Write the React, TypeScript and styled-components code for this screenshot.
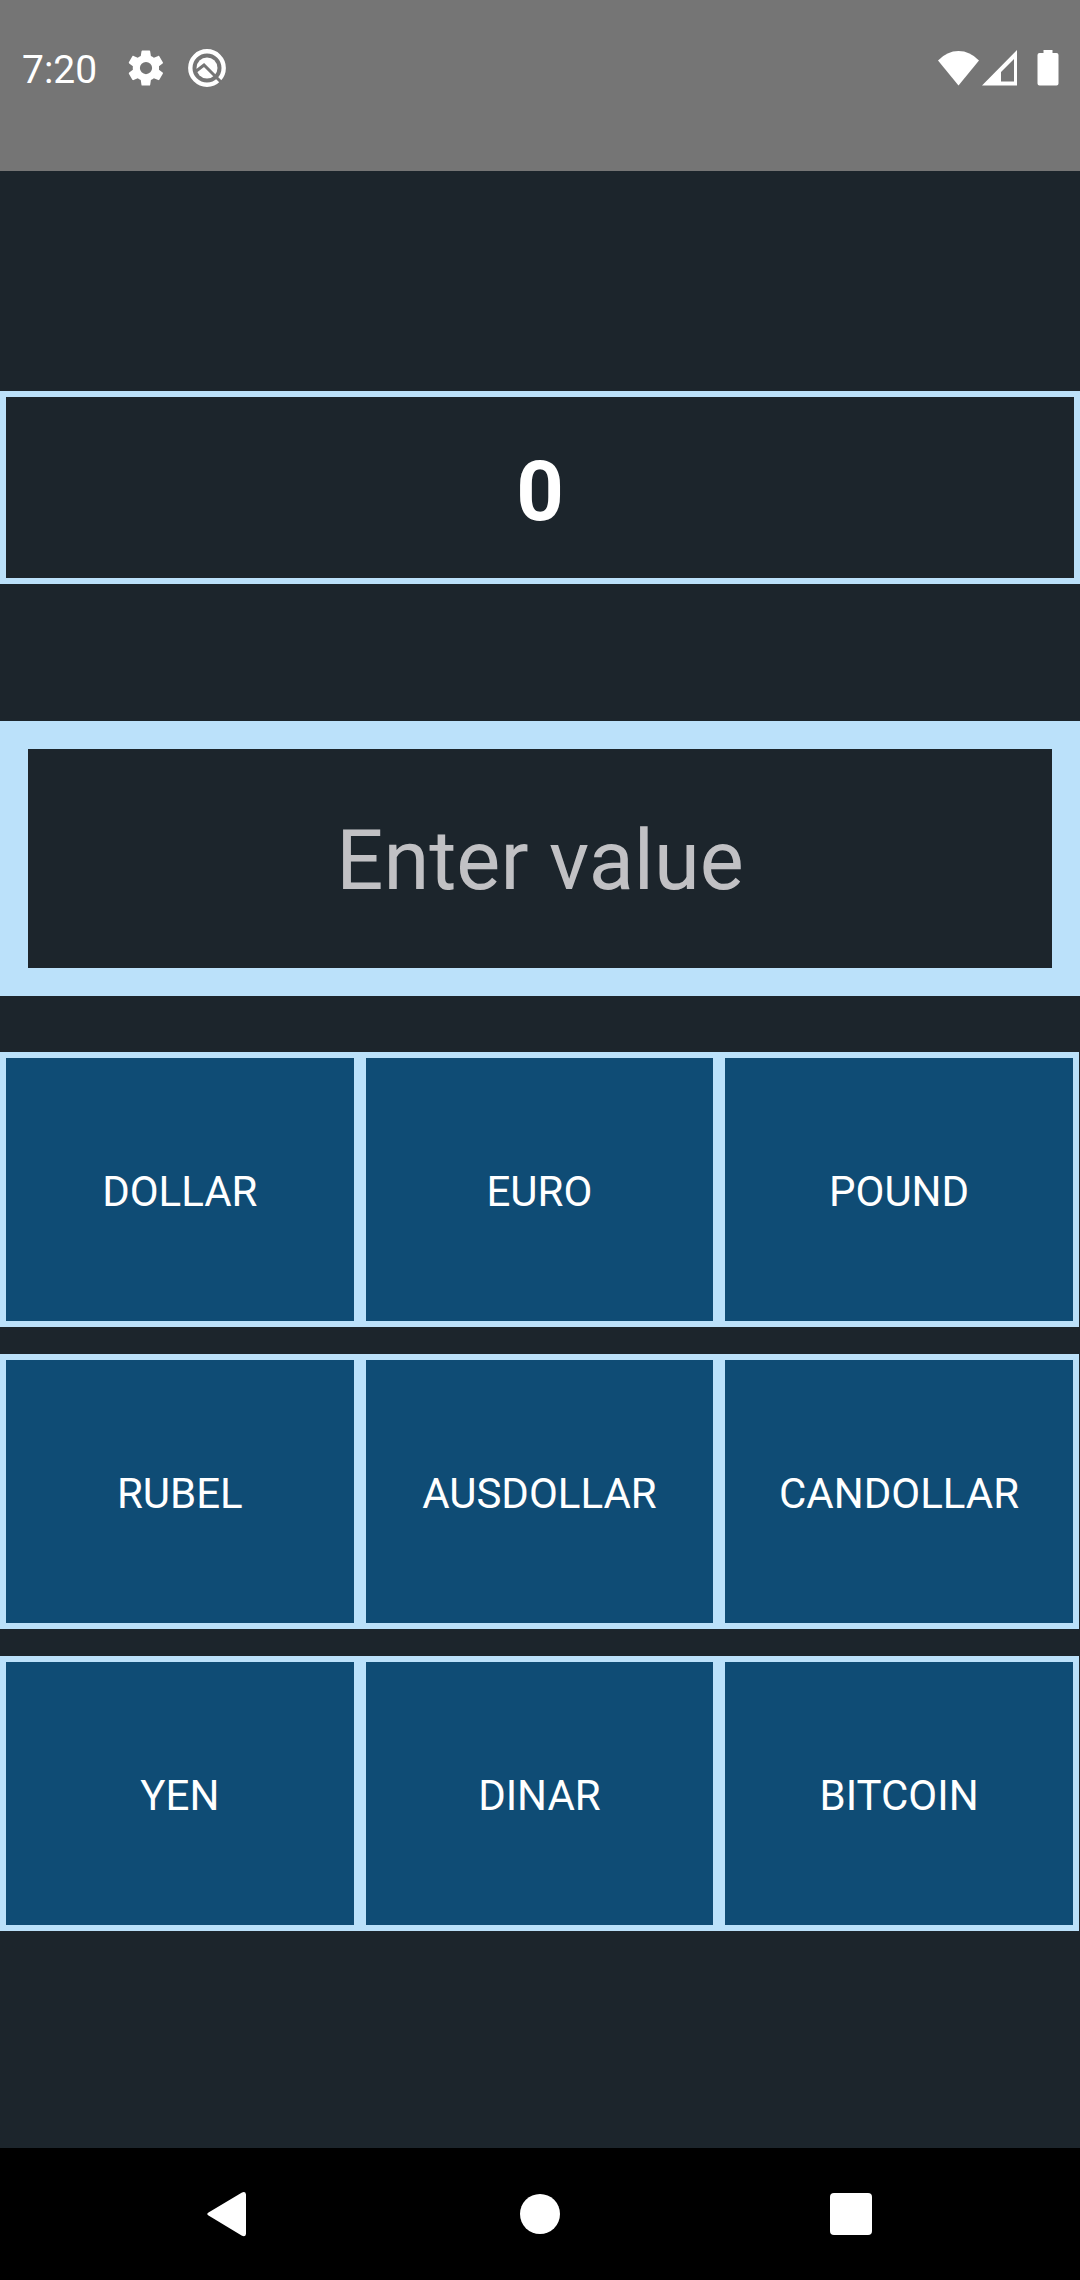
import React, { useState } from "react";
import styled, { createGlobalStyle } from "styled-components";

const color = {
  ink: "#1c252c",
  blue: "#0f4c75",
  sky: "#bbe1fa",
  status: "#757575",
  hint: "#c1c1c4",
};

const GlobalStyle = createGlobalStyle`
  *, *::before, *::after { box-sizing: border-box; }
  body {
    margin: 0;
    background: ${color.ink};
    font-family: Roboto, "Noto Sans", sans-serif;
    color: #fff;
  }
`;

const Screen = styled.div`
  min-height: 100vh;
  display: flex;
  flex-direction: column;
`;

const StatusBar = styled.header`
  height: 171px;
  padding: 44px 19px 0 22px;
  display: flex;
  justify-content: space-between;
  align-items: flex-start;
  background: ${color.status};
`;

const StatusGroup = styled.div<{ $gap: number }>`
  height: 48px;
  display: flex;
  align-items: center;
  gap: ${(p) => p.$gap}px;
`;

const Clock = styled.time`
  padding-top: 4px;
  margin-right: 7px;
  font-size: 39px;
  line-height: 48px;
`;

const Glyph = styled.svg`
  display: block;
  fill: #fff;
`;

const Main = styled.main`
  flex: 1;
  display: flex;
  flex-direction: column;
  padding-top: 220px;
`;

const Result = styled.output`
  display: block;
  padding: 47px 0 38px;
  border: 6px solid ${color.sky};
  text-align: center;
  font-size: 83px;
  line-height: 96px;
  font-weight: 700;
`;

const ValueInput = styled.input`
  display: block;
  width: 100%;
  margin: 137px 0 56px;
  padding: 63px 0 58px;
  border: 28px solid ${color.sky};
  border-radius: 0;
  background: transparent;
  color: #fff;
  text-align: center;
  font-family: inherit;
  font-size: 83px;
  line-height: 98px;
  outline: none;

  &::placeholder {
    color: ${color.hint};
    opacity: 1;
  }
`;

const Keys = styled.div`
  display: grid;
  grid-template-columns: repeat(3, 33.3%);
  grid-auto-rows: 275px;
  row-gap: 27px;
`;

const CurrencyButton = styled.button`
  padding: 4px 0 0;
  border: 6px solid ${color.sky};
  border-radius: 0;
  background: ${color.blue};
  color: #fff;
  font-family: inherit;
  font-size: 42px;
  line-height: 48px;
  text-transform: uppercase;
  cursor: pointer;
`;

const NavBar = styled.nav`
  height: 132px;
  display: flex;
  justify-content: center;
  background: #000;
`;

const NavButton = styled.button`
  flex: 0 1 311px;
  display: flex;
  align-items: center;
  justify-content: center;
  padding: 0;
  border: 0;
  background: transparent;
  cursor: pointer;
`;

const rates: Record<string, number> = {
  Dollar: 0.012,
  Euro: 0.011,
  Pound: 0.0095,
  Rubel: 1.1,
  AusDollar: 0.018,
  CanDollar: 0.016,
  Yen: 1.8,
  Dinar: 0.0037,
  Bitcoin: 0.0000004,
};

export default function App() {
  const [value, setValue] = useState("");
  const [result, setResult] = useState("0");

  const convert = (name: string) => {
    const amount = parseFloat(value);
    if (!Number.isNaN(amount)) setResult(String(+(amount * rates[name]).toFixed(6)));
  };

  return (
    <>
      <GlobalStyle />
      <Screen>
        <StatusBar>
          <StatusGroup $gap={21}>
            <Clock>7:20</Clock>
            <Glyph width="42" height="42" viewBox="0 0 24 24" aria-hidden="true">
              <path d="M19.4 13a7.8 7.8 0 0 0 0-2l2.1-1.6c.2-.2.3-.4.1-.7l-2-3.4c-.1-.2-.4-.3-.6-.2l-2.5 1a7.3 7.3 0 0 0-1.7-1l-.4-2.6a.5.5 0 0 0-.5-.5h-4c-.2 0-.4.2-.5.5L9 5.1a7.7 7.7 0 0 0-1.7 1l-2.4-1c-.3-.1-.5 0-.7.2l-2 3.4c-.1.3 0 .5.2.7L4.5 11a7.9 7.9 0 0 0 0 2l-2.1 1.6c-.2.2-.3.4-.2.7l2 3.4c.2.2.4.3.7.2l2.4-1c.5.4 1.1.7 1.700 1l.4 2.600c0 .3.2.5.5.5h4c.3 0 .5-.2.5-.5l.4-2.600c.6-.3 1.200-.6 1.700-1l2.500 1c.2.1.5 0 .6-.2l2-3.400c.2-.3.1-.5-.1-.7zM12 15.500a3.500 3.500 0 1 1 0-7 3.500 3.500 0 0 1 0 7z" />
            </Glyph>
            <Glyph width="38" height="38" viewBox="0 0 38 38" aria-hidden="true">
              <circle cx="19" cy="19" r="16.700" fill="none" stroke="#fff" strokeWidth="4.400" />
              <circle cx="19" cy="19" r="10.500" />
              <path d="M7 23l9-7 17 17" fill="none" stroke={color.status} strokeWidth="3" />
            </Glyph>
          </StatusGroup>
          <StatusGroup $gap={3}>
            <Glyph width="41" height="36" viewBox="0 0 41 36" aria-hidden="true">
              <path d="M0 10.500Q9 1 20.500 1T41 10.500L20.500 35.500z" />
            </Glyph>
            <Glyph width="35" height="36" viewBox="0 0 35 36" aria-hidden="true">
              <path fillRule="evenodd" d="M35 0v35.500H0zM32 9L19 22v9.500h13z" />
            </Glyph>
            <Glyph width="41" height="36" viewBox="0 0 41 36" aria-hidden="true">
              <path d="M23.500 0h9v3h4q2 0 2 2v28.500q0 2-2 2h-17q-2 0-2-2V5q0-2 2-2h4z" />
            </Glyph>
          </StatusGroup>
        </StatusBar>

        <Main>
          <Result htmlFor="amount">{result}</Result>
          <ValueInput
            id="amount"
            aria-label="Enter value"
            placeholder="Enter value"
            inputMode="decimal"
            value={value}
            onChange={(e) => setValue(e.target.value)}
          />
          <Keys>
            {Object.keys(rates).map((name) => (
              <CurrencyButton key={name} type="button" onClick={() => convert(name)}>
                {name}
              </CurrencyButton>
            ))}
          </Keys>
        </Main>

        <NavBar>
          <NavButton type="button" aria-label="Back">
            <Glyph width="44" height="46" viewBox="0 0 44 46">
              <path d="M1.500 21.500L35 1.400q3.500-1.500 4 2v39.500q-.5 3.200-4 1.800L1.500 24.500q-2.500-1.500 0-3z" />
            </Glyph>
          </NavButton>
          <NavButton type="button" aria-label="Home">
            <Glyph width="40" height="40" viewBox="0 0 40 40">
              <circle cx="20" cy="20" r="20" />
            </Glyph>
          </NavButton>
          <NavButton type="button" aria-label="Recent apps">
            <Glyph width="42" height="42" viewBox="0 0 42 42">
              <rect width="42" height="42" rx="4" />
            </Glyph>
          </NavButton>
        </NavBar>
      </Screen>
    </>
  );
}
